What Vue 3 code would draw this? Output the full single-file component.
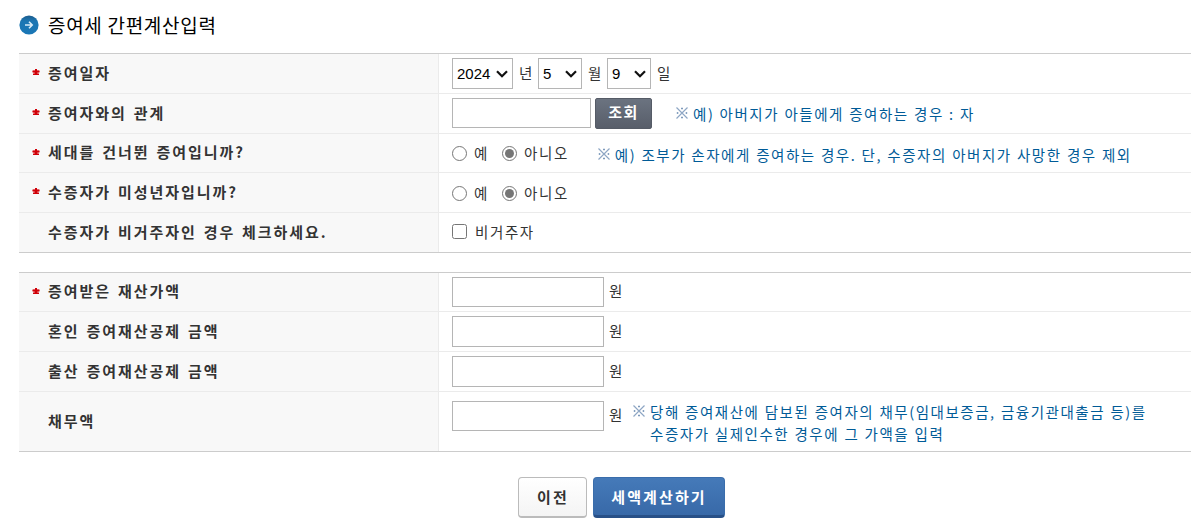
<template>
  <div class="gift-tax">
    <h2 class="page-title">
      <svg class="title-icon" width="20" height="20" viewBox="0 0 20 20">
        <defs>
          <linearGradient id="titleFill" x1="0" y1="0" x2="0" y2="1">
            <stop offset="0" stop-color="#1d5c8c" />
            <stop offset="0.3" stop-color="#1b76b3" />
            <stop offset="1" stop-color="#1a77b6" />
          </linearGradient>
        </defs>
        <circle cx="10" cy="10" r="9.6" fill="url(#titleFill)" />
        <path
          d="M6 10h7.2M10 6.8l3.2 3.2-3.2 3.2"
          fill="none"
          stroke="#d9ecf8"
          stroke-width="1.6"
        />
      </svg>
      <span>증여세 간편계산입력</span>
    </h2>

    <div class="form-table">
      <div class="form-row">
        <div class="form-head"><RequiredMark />증여일자</div>
        <div class="form-cell">
          <select v-model="year" class="select-year">
            <option>2024</option>
            <option>2023</option>
          </select>
          <span class="unit unit-date">년</span>
          <select v-model="month" class="select-short">
            <option v-for="m in 12" :key="m">{{ m }}</option>
          </select>
          <span class="unit unit-date">월</span>
          <select v-model="day" class="select-short">
            <option v-for="d in 31" :key="d">{{ d }}</option>
          </select>
          <span class="unit unit-date">일</span>
        </div>
      </div>

      <div class="form-row">
        <div class="form-head"><RequiredMark />증여자와의 관계</div>
        <div class="form-cell">
          <input v-model="relation" type="text" class="input-relation" />
          <button type="button" class="btn-search">조회</button>
          <p class="note note-relation">
            <NoteMark />예) 아버지가 아들에게 증여하는 경우 : 자
          </p>
        </div>
      </div>

      <div
        v-for="item in questions"
        :key="item.name"
        class="form-row"
        :class="{ short: item.note }"
      >
        <div class="form-head"><RequiredMark />{{ item.label }}</div>
        <div class="form-cell question-cell">
          <label class="choice choice-yes">
            <input v-model="item.value" type="radio" :name="item.name" value="Y" />
            <span>예</span>
          </label>
          <label class="choice">
            <input v-model="item.value" type="radio" :name="item.name" value="N" />
            <span>아니오</span>
          </label>
          <p v-if="item.note" class="note note-question">
            <NoteMark />{{ item.note }}
          </p>
        </div>
      </div>

      <div class="form-row">
        <div class="form-head">수증자가 비거주자인 경우 체크하세요.</div>
        <div class="form-cell check-cell">
          <label class="choice">
            <input v-model="nonResident" type="checkbox" />
            <span>비거주자</span>
          </label>
        </div>
      </div>
    </div>

    <div class="form-table amount-table">
      <div
        v-for="item in amounts"
        :key="item.label"
        class="form-row"
        :class="{ short: item.required, tall: item.note }"
      >
        <div class="form-head">
          <RequiredMark v-if="item.required" />{{ item.label }}
        </div>
        <div class="form-cell">
          <input v-model="item.value" type="text" class="input-amount" />
          <span class="unit unit-won">원</span>
          <p v-if="item.note" class="note note-debt">
            <NoteMark />
            <span>
              {{ item.note[0] }}<br />
              {{ item.note[1] }}
            </span>
          </p>
        </div>
      </div>
    </div>

    <div class="btn-area">
      <button type="button" class="btn btn-prev">이전</button>
      <button type="button" class="btn btn-calc">세액계산하기</button>
    </div>
  </div>
</template>

<script setup>
import { h, ref } from "vue";

// 필수 입력 표시
const RequiredMark = () =>
  h("svg", { class: "required-mark", width: 8, height: 7, viewBox: "0 0 8 7" }, [
    h("path", { d: "M0 1.6h8v1.8H0z", fill: "#e2646a" }),
    h("path", { d: "M3 0h2v1.6h2v1.8H5.4V4.6H7V6H1V4.6h1.6V3.4H1V1.6h2z", fill: "#d00008" }),
  ]);

// 참고(※) 표시
const NoteMark = () =>
  h("svg", { class: "note-mark", width: 12, height: 12, viewBox: "0 0 12 12" }, [
    h("path", { d: "M.5.5l11 11M11.5.5l-11 11", stroke: "#8ea6c4", "stroke-width": 1.2 }),
    h("path", {
      d: "M5.2.8h1.6v1.5H5.2zM5.2 9.7h1.6v1.5H5.2zM.8 5.2h1.5v1.6H.8zM9.7 5.2h1.5v1.6H9.7z",
      fill: "#5f82ac",
    }),
  ]);

const year = ref("2024");
const month = ref("5");
const day = ref("9");
const relation = ref("");
const nonResident = ref(false);

const questions = ref([
  {
    name: "skipGeneration",
    label: "세대를 건너뛴 증여입니까?",
    value: "N",
    note: "예) 조부가 손자에게 증여하는 경우. 단, 수증자의 아버지가 사망한 경우 제외",
  },
  { name: "minor", label: "수증자가 미성년자입니까?", value: "N" },
]);

const amounts = ref([
  { label: "증여받은 재산가액", value: "", required: true },
  { label: "혼인 증여재산공제 금액", value: "" },
  { label: "출산 증여재산공제 금액", value: "" },
  {
    label: "채무액",
    value: "",
    note: [
      "당해 증여재산에 담보된 증여자의 채무(임대보증금, 금융기관대출금 등)를",
      "수증자가 실제인수한 경우에 그 가액을 입력",
    ],
  },
]);
</script>

<style>
body {
  background: #fff;
  overflow: hidden;
}
</style>

<style scoped>
.gift-tax {
  box-sizing: border-box;
  height: 530px;
  padding-left: 19px;
  overflow: hidden;
  background: #fff;
  color: #333;
  font-family: "Noto Sans CJK KR", sans-serif;
  font-size: 14.5px;
}

.gift-tax * {
  box-sizing: border-box;
}

.page-title {
  display: flex;
  align-items: center;
  gap: 9px;
  height: 53px;
  margin: 0;
  padding-bottom: 3px;
  color: #000;
  font-size: 19px;
  font-weight: 400;
  letter-spacing: 0.7px;
  white-space: nowrap;
}

.page-title span {
  padding-bottom: 1px;
}

.form-table {
  border-top: 1px solid #ccc;
  border-bottom: 1px solid #ccc;
}

.amount-table {
  margin-top: 19px;
}

.form-row {
  display: flex;
  height: 40px;
  border-bottom: 1px solid #ebebeb;
}

.form-row.short {
  height: 39px;
}

.form-row.tall {
  height: 60px;
}

.form-row:last-child {
  height: 39px;
  border-bottom: none;
}

.form-row.tall:last-child {
  height: 59px;
}

.form-head {
  position: relative;
  display: flex;
  align-items: center;
  flex: none;
  width: 420px;
  padding: 0 0 3px 29px;
  border-right: 1px solid #ebebeb;
  background: #f8f8f8;
  font-size: 15px;
  font-weight: bold;
  letter-spacing: 1.95px;
  word-spacing: 1.6px;
  white-space: nowrap;
}

.required-mark {
  position: absolute;
  left: 13px;
  top: 15px;
}

.form-cell {
  display: flex;
  align-items: center;
  flex: 1;
  padding-left: 13px;
  white-space: nowrap;
}

select,
input[type="text"] {
  height: 30px;
  margin: 0;
  border: 1px solid #b5b5b5;
  border-radius: 0;
  background: #fff;
}

select {
  height: 31px;
  padding: 0 0 0 4px;
  appearance: none;
  background: #fff
    url("data:image/svg+xml,%3Csvg xmlns='http://www.w3.org/2000/svg' width='12' height='8'%3E%3Cpath d='M1 1.2l5 5 5-5' fill='none' stroke='%23111' stroke-width='2.2'/%3E%3C/svg%3E")
    no-repeat right 4px center;
  color: #000;
  font-family: "Liberation Sans", sans-serif;
  font-size: 15px;
}

.select-year {
  width: 61px;
}

.select-short {
  width: 44px;
}

.form-cell .input-relation {
  width: 139px;
  margin-bottom: 1px;
}

.form-cell .input-amount {
  width: 152px;
  height: 31px;
}

.short .input-amount,
.tall .input-amount {
  height: 30px;
}

.tall .input-amount,
.tall .unit-won {
  margin-bottom: 11px;
}

.unit {
  padding-bottom: 3px;
}

.unit-date {
  width: 25px;
  padding-left: 6px;
}

.unit-won {
  width: 29px;
  padding-left: 5px;
}

.btn-search {
  width: 57px;
  height: 31px;
  margin-left: 4px;
  padding: 0 0 4px;
  border: 1px solid #555b66;
  border-radius: 2px;
  background: linear-gradient(#6b7380, #585e6a);
  color: #fff;
  font: bold 15px "Noto Sans CJK KR", sans-serif;
  letter-spacing: 1.4px;
}

.note {
  display: flex;
  margin: 0;
  color: #005b97;
  line-height: 22px;
  letter-spacing: 1.54px;
  word-spacing: 0.5px;
}

.note-mark {
  flex: none;
  margin: 4px 5px 0 0;
}

.note-relation {
  margin-left: 24px;
}

.note-question {
  margin-left: 29px;
  padding-top: 3px;
}

.note-debt {
  padding-top: 3px;
}

.choice {
  display: flex;
  align-items: center;
  gap: 7px;
  letter-spacing: 1.6px;
}

.choice span {
  padding-bottom: 1px;
}

.choice input {
  width: 15px;
  height: 15px;
  margin: 0;
  accent-color: #767676;
}

.choice-yes {
  width: 50px;
}

.form-row:not(.short) .question-cell {
  padding-top: 1px;
}

.check-cell {
  padding-bottom: 2px;
}

.check-cell .choice {
  gap: 8px;
}

.check-cell .choice span {
  padding-bottom: 0;
}

.btn-area {
  display: flex;
  gap: 6px;
  padding: 25px 0 0 499px;
}

.btn {
  height: 41px;
  padding: 0 0 1px;
  border-radius: 4px;
  font: bold 15px "Noto Sans CJK KR", sans-serif;
  letter-spacing: 2.1px;
}

.btn-prev {
  width: 69px;
  padding-left: 1px;
  border: 1px solid #bbb;
  border-bottom-width: 2px;
  background: linear-gradient(#fff, #f4f4f4);
  color: #333;
}

.btn-calc {
  width: 132px;
  border: 1px solid #3a6dab;
  border-bottom: 3px solid #285087;
  background: linear-gradient(#457ab9, #3869a8);
  color: #fff;
}
</style>
